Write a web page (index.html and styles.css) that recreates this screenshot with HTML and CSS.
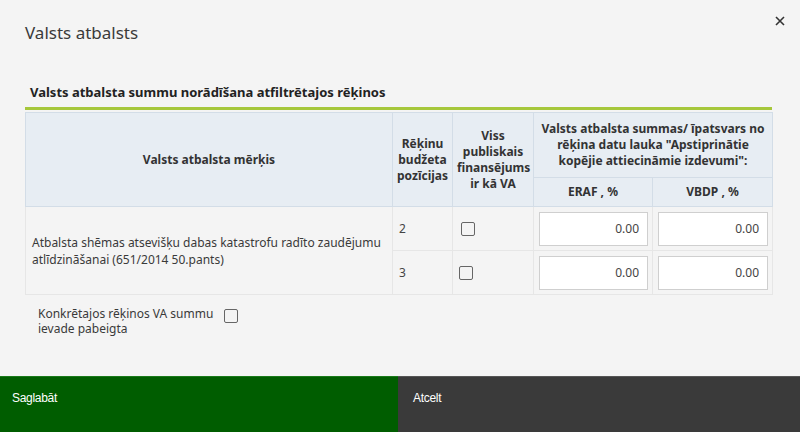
FILE: index.html
```html
<!DOCTYPE html>
<html lang="lv">
<head>
<meta charset="utf-8">
<link rel="stylesheet" href="styles.css">
</head>
<body>
<div class="modal">
  <div class="modal-head">
    <h1 class="modal-title">Valsts atbalsts</h1>
    <button class="close" aria-label="Aizvērt">
      <svg width="10" height="10" viewBox="0 0 10 10"><path d="M1 1L9 9M9 1L1 9" stroke="#333" stroke-width="1.6" fill="none"/></svg>
    </button>
  </div>
  <div class="modal-body">
    <h2 class="section-title">Valsts atbalsta summu norādīšana atfiltrētajos rēķinos</h2>
    <table class="grid">
      <colgroup>
        <col class="c1"><col class="c2"><col class="c3"><col class="c4"><col class="c5">
      </colgroup>
      <thead>
        <tr class="h1">
          <th rowspan="2">Valsts atbalsta mērķis</th>
          <th rowspan="2">Rēķinu budžeta pozīcijas</th>
          <th rowspan="2">Viss publiskais finansējums ir kā VA</th>
          <th colspan="2">Valsts atbalsta summas/ īpatsvars no rēķina datu lauka "Apstiprinātie kopējie attiecināmie izdevumi":</th>
        </tr>
        <tr class="h2">
          <th>ERAF , %</th>
          <th>VBDP , %</th>
        </tr>
      </thead>
      <tbody>
        <tr>
          <td rowspan="2" class="goal">Atbalsta shēmas atsevišķu dabas katastrofu radīto zaudējumu atlīdzināšanai (651/2014 50.pants)</td>
          <td class="num">2</td>
          <td><span class="chk"></span></td>
          <td class="inp"><span class="field">0.00</span></td>
          <td class="inp"><span class="field">0.00</span></td>
        </tr>
        <tr>
          <td class="num">3</td>
          <td><span class="chk"></span></td>
          <td class="inp"><span class="field">0.00</span></td>
          <td class="inp"><span class="field">0.00</span></td>
        </tr>
      </tbody>
    </table>
    <div class="done">
      <span class="done-label">Konkrētajos rēķinos VA summu ievade pabeigta</span>
      <span class="chk"></span>
    </div>
  </div>
  <div class="footer">
    <button class="btn save">Saglabāt</button>
    <button class="btn cancel">Atcelt</button>
  </div>
</div>
</body>
</html>
```
FILE: styles.css
```css
* { box-sizing: border-box; }
html, body { margin: 0; padding: 0; }
body {
  width: 800px;
  height: 432px;
  background: #f4f4f4;
  font-family: "Noto Sans", "Open Sans", sans-serif;
  color: #333;
  overflow: hidden;
}
.modal {
  height: 432px;
  display: flex;
  flex-direction: column;
}
.modal-head {
  display: flex;
  justify-content: space-between;
  align-items: flex-start;
  padding: 21px 16px 0 25px;
  height: 80px;
}
.modal-title {
  margin: 0;
  font-size: 17px;
  font-weight: 400;
  line-height: 24px;
  color: #3a3a3a;
}
.close {
  border: 0;
  background: none;
  padding: 0;
  margin-top: -7px;
  margin-right: -1px;
  width: 10px;
  height: 10px;
  display: flex;
  position: relative;
  top: 2px;
}
.modal-body {
  padding: 0 28px 0 25px;
}
.section-title {
  margin: 0;
  font-size: 13px;
  font-weight: 700;
  line-height: 18px;
  padding: 3px 0 6px 5px;
  border-bottom: 3px solid #a6c73b;
  color: #222;
}
.grid {
  margin-top: 2px;
  width: 747px;
  border-collapse: collapse;
  table-layout: fixed;
  font-size: 12px;
}
.c1 { width: 367px; }
.c2 { width: 60px; }
.c3 { width: 81px; }
.c4 { width: 119px; }
.c5 { width: 120px; }
.grid th {
  background: #e7edf3;
  border: 1px solid #d3dde7;
  font-weight: 700;
  color: #333;
  line-height: 16px;
  padding: 2px 4px;
  text-align: center;
}
.grid tr.h1 th { height: 65px; }
.grid tr.h2 th { height: 29px; }
.grid td {
  border: 1px solid #e6e6e6;
  background: #f4f4f4;
  height: 44px;
  padding: 0 5px;
  vertical-align: middle;
}
.grid td.goal {
  line-height: 17px;
  padding: 0 6px;
  color: #3a3a3a;
}
.grid td.num { color: #444; padding-left: 6px; }
.grid td:nth-child(3) { padding-left: 8px; }
.grid tbody tr + tr td:nth-child(2) { padding-left: 6px; }
.chk {
  display: block;
  width: 14px;
  height: 14px;
  border: 1px solid #666;
  border-radius: 2px;
  background: transparent;
}
.grid td.inp { padding: 0 4px 0 5px; }
.field {
  display: block;
  height: 34px;
  background: #fff;
  border: 1px solid #cfcfcf;
  text-align: right;
  padding-right: 8px;
  line-height: 32px;
  font-size: 12px;
  color: #444;
}
.done {
  display: flex;
  align-items: flex-start;
  gap: 6px;
  padding: 11px 0 0 13px;
  font-size: 12px;
  line-height: 15px;
  color: #3a3a3a;
}
.done-label { width: 180px; }
.done .chk { margin-top: 3px; }
.footer {
  margin-top: auto;
  display: flex;
  height: 56px;
}
.btn {
  border: 0;
  margin: 0;
  font-family: "Liberation Sans", sans-serif;
  font-size: 12px;
  color: #fff;
  text-align: left;
  padding: 0 0 14px 12px;
  letter-spacing: -0.3px;
}
.save { background: #005d00; width: 398px; border-top: 1px solid #1a7a1a; }
.cancel { background: #3a3a3a; flex: 1; padding-left: 15px; border-top: 1px solid #555; }
```
